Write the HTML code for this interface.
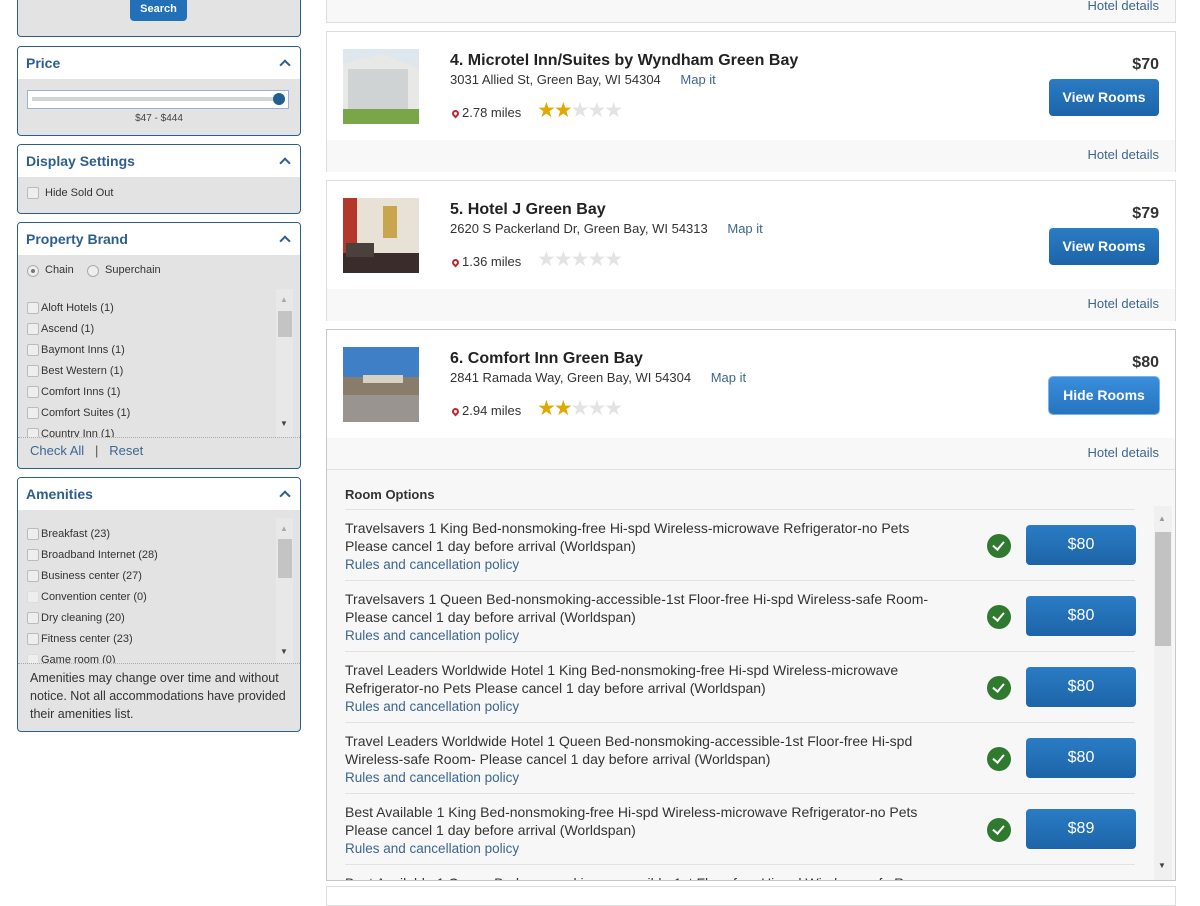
<!DOCTYPE html>
<html><head><meta charset="utf-8"><style>
*{box-sizing:border-box;margin:0;padding:0}
body{width:1200px;height:896px;overflow:hidden;background:#fff;font-family:"Liberation Sans",Arial,sans-serif;position:relative;color:#333}
.a{position:absolute}
.panel{position:absolute;left:17px;width:284px;border:1px solid #2c5d8f;border-radius:4px;background:#e3e3e3;overflow:hidden}
.ph{height:32px;background:#fff;color:#2d5f8e;font-weight:bold;font-size:14px;padding:8px 8px}
.chev{position:absolute;right:11px;top:14px;width:8px;height:8px;border-left:2px solid #2d5f8e;border-top:2px solid #2d5f8e;transform:rotate(45deg)}
.cb{position:absolute;left:9px;width:12px;height:12px;border:1px solid #bbb;border-radius:2px;background:#eee}
.lt{position:absolute;left:23px;font-size:11px;color:#333}
.card{position:absolute;left:326px;width:850px;border:1px solid #ddd;background:#fff}
.strip{position:absolute;left:0;right:0;background:#f8f8f8}
.hd{position:absolute;right:16px;font-size:13px;color:#3d6690}
.thumb{position:absolute;left:16px;top:17px;width:76px;height:75px}
.name{position:absolute;left:123px;top:20px;font-size:16px;font-weight:bold;color:#222}
.addr{position:absolute;left:123px;top:40px;font-size:13px;color:#333}
.map{color:#3d6690;margin-left:16px}
.dist{position:absolute;left:125px;top:73px;font-size:13px;color:#333}
.pin{display:inline-block;width:7px;height:7px;border:2px solid #c0262d;border-radius:50% 50% 50% 0;transform:rotate(-45deg);margin-right:3px}
.stars{position:absolute;left:210px;top:66px;font-size:21px;letter-spacing:-2px;color:#e3e3e3}
.stars b{color:#e0a800;font-weight:normal}
.price{position:absolute;right:16px;top:24px;font-size:16px;font-weight:bold;color:#333}
.btn{position:absolute;right:16px;top:47px;width:110px;height:37px;background:linear-gradient(#2a7cc4,#1d64a8);border-radius:4px;color:#fff;font-weight:bold;font-size:14px;text-align:center;line-height:37px}
.row{position:absolute;left:18px;width:790px;height:71px;border-top:1px solid #e2e2e2}
.rt{position:absolute;left:0;top:9px;font-size:14px;line-height:18px;color:#333;width:600px}
.rl{color:#3d6690;font-size:13.5px}
.ok{position:absolute;left:642px;top:24px;width:24px;height:24px;border-radius:50%;background:#2f7a2f}
.ok:after{content:"";position:absolute;left:8px;top:5px;width:5px;height:9px;border-right:2.5px solid #fff;border-bottom:2.5px solid #fff;transform:rotate(40deg)}
.pb{position:absolute;left:681px;top:15px;width:110px;height:40px;border-radius:4px;background:linear-gradient(#2a7cc4,#1d64a8);color:#fff;font-size:16px;text-align:center;line-height:40px}
</style></head><body>

<div class="panel" style="top:-5px;height:42px"></div>
<div class="a" style="left:130px;top:0;width:57px;height:21px;background:#2270b8;border-radius:0 0 4px 4px;color:#fff;font-size:11px;font-weight:bold;text-align:center;line-height:18px">Search</div>

<div class="panel" style="top:46px;height:90px"><div class="ph">Price</div><div class="chev"></div>
<div class="a" style="left:9px;top:43px;width:262px;height:19px;background:#fff;border:1px solid #9bb0d8"></div>
<div class="a" style="left:14px;top:50px;width:244px;height:4px;background:#d0d4d6"></div>
<div class="a" style="left:255px;top:46px;width:12px;height:12px;border-radius:50%;background:#1f5f94"></div>
<div class="a" style="left:0;width:282px;top:66px;text-align:center;font-size:10px;color:#444">$47 - $444</div></div>

<div class="panel" style="top:144px;height:70px"><div class="ph">Display Settings</div><div class="chev"></div>
<div class="cb" style="top:42px"></div><div class="lt" style="left:27px;top:42px">Hide Sold Out</div></div>

<div class="panel" style="top:222px;height:247px"><div class="ph">Property Brand</div><div class="chev"></div>
<div class="a" style="left:9px;top:42px;width:12px;height:12px;border:1px solid #aaa;border-radius:50%;background:#eee"><div class="a" style="left:3px;top:3px;width:4px;height:4px;border-radius:50%;background:#777"></div></div>
<div class="lt" style="left:27px;top:41px">Chain</div>
<div class="a" style="left:69px;top:42px;width:12px;height:12px;border:1px solid #aaa;border-radius:50%;background:#eee"></div>
<div class="lt" style="left:87px;top:41px">Superchain</div>
<div class="a" style="left:0;top:66px;width:282px;height:149px;overflow:hidden;border-bottom:1px dotted #aaa">
<div class="cb" style="top:13px"></div><div class="lt" style="top:13px">Aloft Hotels (1)</div>
<div class="cb" style="top:34px"></div><div class="lt" style="top:34px">Ascend (1)</div>
<div class="cb" style="top:55px"></div><div class="lt" style="top:55px">Baymont Inns (1)</div>
<div class="cb" style="top:76px"></div><div class="lt" style="top:76px">Best Western (1)</div>
<div class="cb" style="top:97px"></div><div class="lt" style="top:97px">Comfort Inns (1)</div>
<div class="cb" style="top:118px"></div><div class="lt" style="top:118px">Comfort Suites (1)</div>
<div class="cb" style="top:139px"></div><div class="lt" style="top:139px">Country Inn (1)</div>
<div class="a" style="left:258px;top:0;width:17px;height:149px;background:#e8e8e8"></div>
<div class="a" style="left:260px;top:22px;width:14px;height:26px;background:#c4c4c4"></div>
<div class="a" style="left:262px;top:6px;font-size:8px;color:#aaa">▲</div>
<div class="a" style="left:262px;top:130px;font-size:8px;color:#444">▼</div>
</div>
<div class="a" style="left:12px;top:220px;font-size:13px;color:#3d6690">Check All &nbsp;&nbsp;<span style="color:#555">|</span>&nbsp;&nbsp; Reset</div></div>

<div class="panel" style="top:477px;height:255px"><div class="ph">Amenities</div><div class="chev"></div>
<div class="a" style="left:0;top:40px;width:282px;height:146px;overflow:hidden;border-bottom:1px dotted #aaa">
<div class="cb" style="top:10px"></div><div class="lt" style="top:10px">Breakfast (23)</div>
<div class="cb" style="top:31px"></div><div class="lt" style="top:31px">Broadband Internet (28)</div>
<div class="cb" style="top:52px"></div><div class="lt" style="top:52px">Business center (27)</div>
<div class="cb" style="top:73px;border-color:#ddd"></div><div class="lt" style="top:73px">Convention center (0)</div>
<div class="cb" style="top:94px"></div><div class="lt" style="top:94px">Dry cleaning (20)</div>
<div class="cb" style="top:115px"></div><div class="lt" style="top:115px">Fitness center (23)</div>
<div class="cb" style="top:136px;border-color:#ddd"></div><div class="lt" style="top:136px">Game room (0)</div>
<div class="a" style="left:258px;top:0;width:17px;height:146px;background:#e8e8e8"></div>
<div class="a" style="left:260px;top:21px;width:14px;height:39px;background:#c4c4c4"></div>
<div class="a" style="left:262px;top:6px;font-size:8px;color:#aaa">▲</div>
<div class="a" style="left:262px;top:129px;font-size:8px;color:#444">▼</div>
</div>
<div class="a" style="left:12px;top:191px;width:268px;font-size:12.5px;line-height:18px;color:#333">Amenities may change over time and without notice. Not all accommodations have provided their amenities list.</div></div>

<div class="card" style="top:-10px;height:33px;background:#f8f8f8"><div class="hd" style="top:7px">Hotel details</div></div>

<div class="card" style="top:31px;height:141px">
<div class="strip" style="top:108px;height:32px"></div>
<svg class="thumb" viewBox="0 0 76 75"><rect width="76" height="75" fill="#dfe7ee"/><polygon points="0,15 40,5 76,20 76,62 0,62" fill="#e8e8e6"/><rect x="5" y="20" width="60" height="40" fill="#cfd3d4"/><rect x="0" y="60" width="76" height="15" fill="#7aa64a"/></svg>
<div class="name">4. Microtel Inn/Suites by Wyndham Green Bay</div>
<div class="addr">3031 Allied St, Green Bay, WI 54304 <span class="map">Map it</span></div>
<div class="dist"><span class="pin"></span>2.78 miles</div>
<div class="stars"><b>★★</b>★★★</div>
<div class="price">$70</div><div class="btn">View Rooms</div>
<div class="hd" style="top:115px">Hotel details</div></div>

<div class="card" style="top:180px;height:141px">
<div class="strip" style="top:108px;height:32px"></div>
<svg class="thumb" viewBox="0 0 76 75"><rect width="76" height="75" fill="#e8e2d6"/><rect width="14" height="75" fill="#b5372c"/><rect x="40" y="8" width="14" height="32" fill="#c9a550"/><rect x="0" y="55" width="76" height="20" fill="#3a2c2a"/><rect x="3" y="45" width="28" height="14" fill="#4a403c"/></svg>
<div class="name">5. Hotel J Green Bay</div>
<div class="addr">2620 S Packerland Dr, Green Bay, WI 54313 <span class="map">Map it</span></div>
<div class="dist"><span class="pin"></span>1.36 miles</div>
<div class="stars">★★★★★</div>
<div class="price">$79</div><div class="btn">View Rooms</div>
<div class="hd" style="top:115px">Hotel details</div></div>

<div class="card" style="top:329px;height:552px;border-color:#c8c8c8;background:#f7f7f7">
<div class="a" style="left:0;top:0;width:848px;height:108px;background:#fff"></div>
<div class="strip" style="top:108px;height:32px;border-bottom:1px solid #e2e2e2"></div>
<svg class="thumb" viewBox="0 0 76 75"><rect width="76" height="75" fill="#3f7fc5"/><rect y="30" width="76" height="20" fill="#8a7c6a"/><rect x="20" y="28" width="40" height="8" fill="#d8d0c0"/><rect y="48" width="76" height="27" fill="#9a9490"/></svg>
<div class="name">6. Comfort Inn Green Bay</div>
<div class="addr">2841 Ramada Way, Green Bay, WI 54304 <span class="map">Map it</span></div>
<div class="dist"><span class="pin"></span>2.94 miles</div>
<div class="stars"><b>★★</b>★★★</div>
<div class="price">$80</div><div class="btn" style="background:linear-gradient(#3a8edb,#2674c0);box-shadow:0 0 0 1px #7ab3ec">Hide Rooms</div>
<div class="hd" style="top:115px">Hotel details</div>
<div class="a" style="left:18px;top:157px;font-size:13px;font-weight:bold;color:#333">Room Options</div>
<div class="a" style="left:0;top:176px;width:848px;height:374px;overflow:hidden">
<div class="row" style="top:3px"><div class="rt">Travelsavers 1 King Bed-nonsmoking-free Hi-spd Wireless-microwave Refrigerator-no Pets Please cancel 1 day before arrival (Worldspan)<br><span class="rl">Rules and cancellation policy</span></div><div class="ok"></div><div class="pb">$80</div></div>
<div class="row" style="top:74px"><div class="rt">Travelsavers 1 Queen Bed-nonsmoking-accessible-1st Floor-free Hi-spd Wireless-safe Room- Please cancel 1 day before arrival (Worldspan)<br><span class="rl">Rules and cancellation policy</span></div><div class="ok"></div><div class="pb">$80</div></div>
<div class="row" style="top:145px"><div class="rt">Travel Leaders Worldwide Hotel 1 King Bed-nonsmoking-free Hi-spd Wireless-microwave Refrigerator-no Pets Please cancel 1 day before arrival (Worldspan)<br><span class="rl">Rules and cancellation policy</span></div><div class="ok"></div><div class="pb">$80</div></div>
<div class="row" style="top:216px"><div class="rt">Travel Leaders Worldwide Hotel 1 Queen Bed-nonsmoking-accessible-1st Floor-free Hi-spd Wireless-safe Room- Please cancel 1 day before arrival (Worldspan)<br><span class="rl">Rules and cancellation policy</span></div><div class="ok"></div><div class="pb">$80</div></div>
<div class="row" style="top:287px"><div class="rt">Best Available 1 King Bed-nonsmoking-free Hi-spd Wireless-microwave Refrigerator-no Pets Please cancel 1 day before arrival (Worldspan)<br><span class="rl">Rules and cancellation policy</span></div><div class="ok"></div><div class="pb">$89</div></div>
<div class="row" style="top:358px"><div class="rt">Best Available 1 Queen Bed-nonsmoking-accessible-1st Floor-free Hi-spd Wireless-safe Room</div></div>
<div class="a" style="left:827px;top:0;width:18px;height:374px;background:#f0f0f0"></div>
<div class="a" style="left:828px;top:26px;width:16px;height:114px;background:#c2c2c2"></div>
<div class="a" style="left:831px;top:8px;font-size:8px;color:#999">▲</div>
<div class="a" style="left:831px;top:355px;font-size:8px;color:#444">▼</div>
</div></div>
<div class="card" style="top:886px;height:20px"></div>
</body></html>
